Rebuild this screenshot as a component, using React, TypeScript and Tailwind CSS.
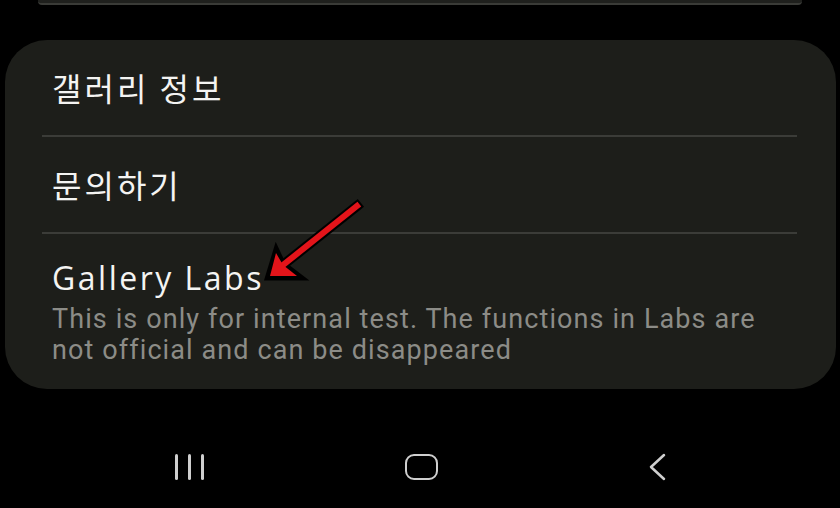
import React from "react";

const Row: React.FC<{ label: string }> = ({ label }) => (
  <div className="h-[95px] flex items-center pl-[47px] pb-[1px]">
    <span className="text-[32px] leading-none text-[#f4f4f2] tracking-[3px]">{label}</span>
  </div>
);

const Divider = () => <div className="h-[2px] ml-[37px] mr-[39px] bg-[#3b3c38]"></div>;

export default function App() {
  return (
    <div
      className="relative w-[840px] h-[508px] bg-black overflow-hidden"
      style={{ fontFamily: '"Noto Sans CJK KR", "Noto Sans", sans-serif' }}
    >
      {/* bottom edge of the previous card */}
      <div className="h-[5px] mx-[38px] rounded-b-[4px] bg-[#1f201d] border-b-2 border-[#3a3b37]"></div>

      <div className="mt-[35px] ml-[5px] mr-[4px] h-[349px] rounded-[42px] bg-[#1d1e1a] flex flex-col">
        <Row label="갤러리 정보" />
        <Divider />
        <Row label="문의하기" />
        <Divider />
        <div className="pl-[47px] pt-[25px]">
          <div
            className="text-[32px] leading-[38px] font-medium text-[#f4f4f2] tracking-[2.5px]"
            style={{ fontFamily: '"Open Sans", sans-serif' }}
          >
            Gallery Labs
          </div>
          <div
            className="mt-[7px] text-[27px] leading-[31px] text-[#8c8c87] tracking-[1.1px]"
            style={{ fontFamily: "Roboto, sans-serif" }}
          >
            This is only for internal test. The functions in Labs are
            <br />
            not official and can be disappeared
          </div>
        </div>
      </div>

      {/* navigation bar */}
      <div className="flex items-center mt-[65px] h-[26px]">
        <div className="w-[376px] flex justify-end pr-[172px] gap-[10px]">
          <div className="w-[3px] h-[26px] bg-[#cfcfcf] rounded-full"></div>
          <div className="w-[3px] h-[26px] bg-[#cfcfcf] rounded-full"></div>
          <div className="w-[3px] h-[26px] bg-[#cfcfcf] rounded-full"></div>
        </div>
        <div className="ml-[29px] w-[33px] h-[26px] rounded-[9px] border-[2.5px] border-[#cfcfcf]"></div>
        <div className="ml-[209px]">
          <svg width="20" height="28" viewBox="0 0 20 28">
            <path d="M17 2 L4 14 L17 26" fill="none" stroke="#cfcfcf" strokeWidth="2.5" strokeLinecap="round" strokeLinejoin="round" />
          </svg>
        </div>
      </div>

      {/* annotation arrow */}
      <svg className="absolute left-0 top-0" width="840" height="508" viewBox="0 0 840 508">
        <line x1="357" y1="206" x2="283" y2="265" stroke="#000" strokeWidth="10" strokeLinecap="square" />
        <polygon points="266,279 276,246 284,263 305,279" fill="#000" stroke="#000" strokeWidth="3" strokeLinejoin="miter" />
        <line x1="357" y1="206" x2="283" y2="265" stroke="#e3141a" strokeWidth="6" strokeLinecap="square" />
        <polygon points="270,276 276,253 283,265 297,276" fill="#e3141a" />
      </svg>
    </div>
  );
}
